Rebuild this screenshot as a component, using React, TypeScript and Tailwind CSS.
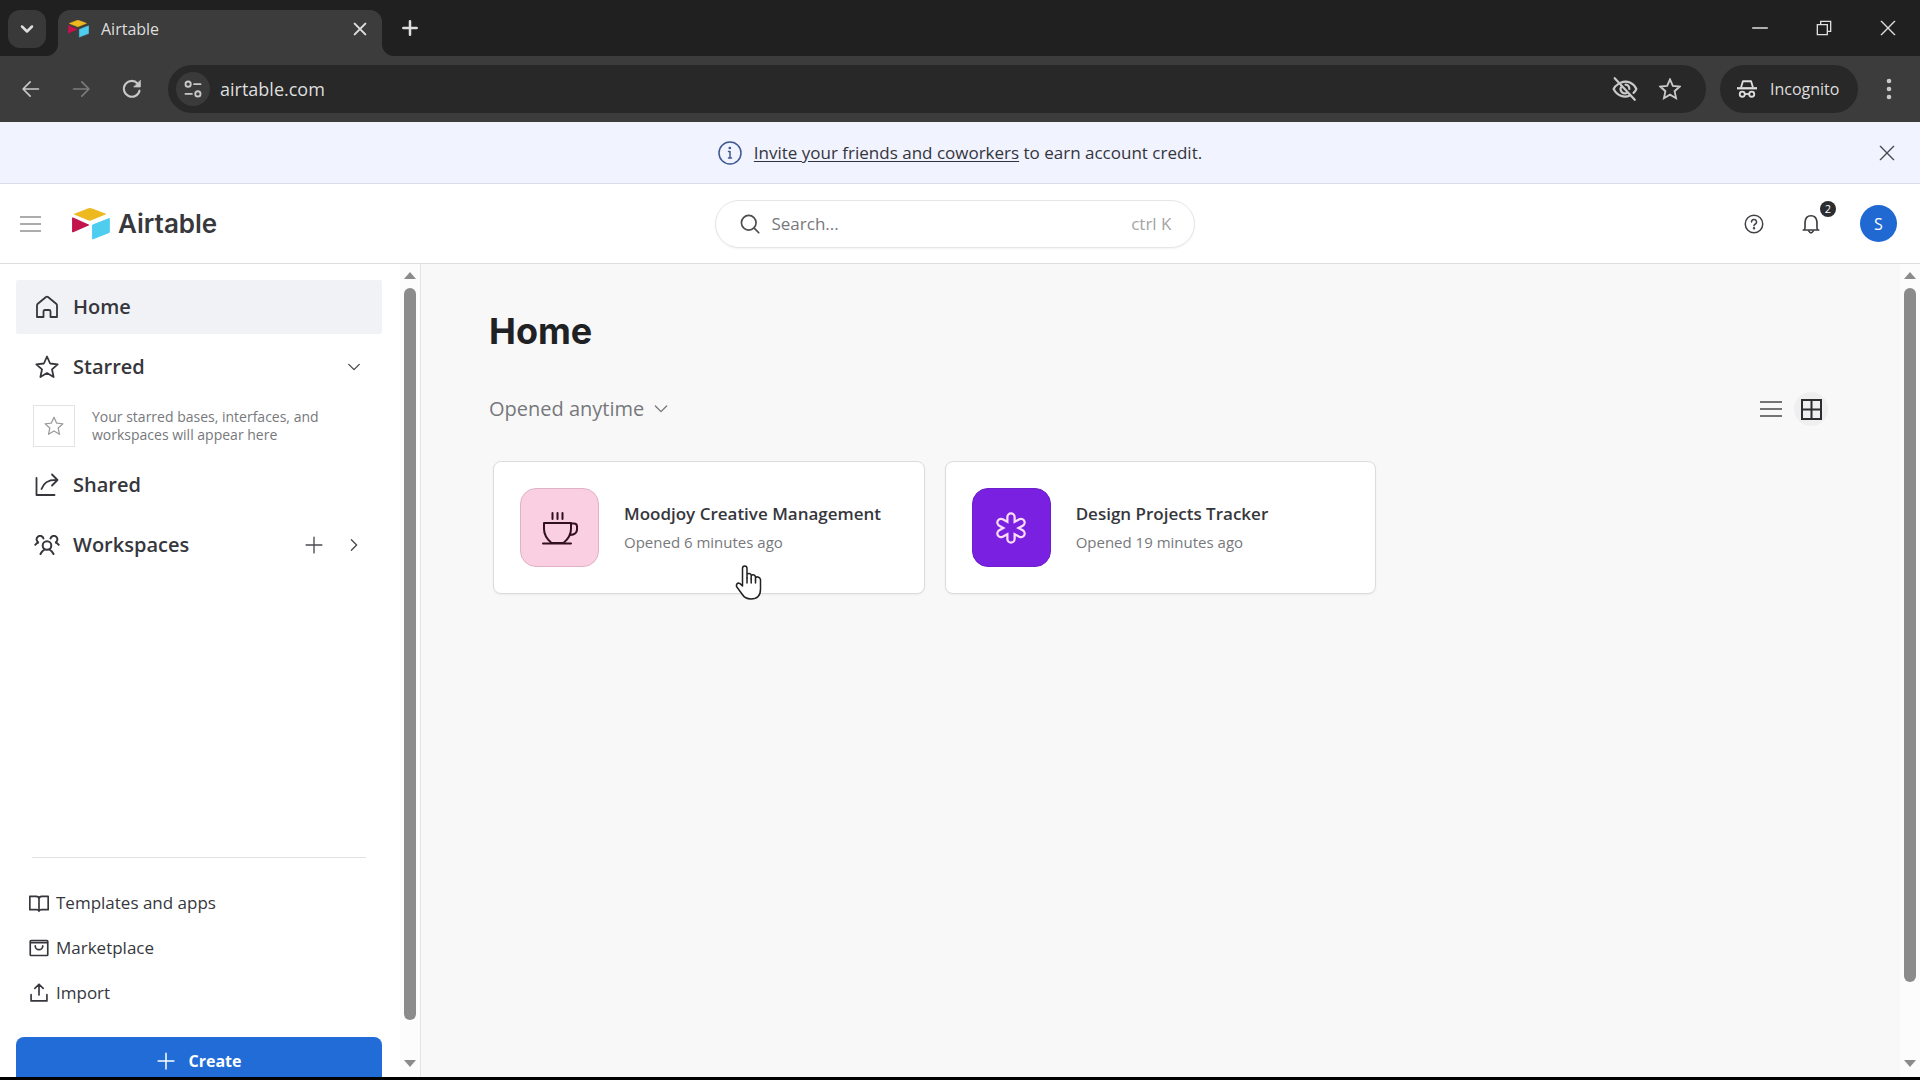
import type { ReactNode, SVGProps } from "react";
import clsx from "clsx";

const Icon = ({
  size = 24,
  stroke = 2,
  children,
  ...props
}: SVGProps<SVGSVGElement> & { size?: number; stroke?: number }) => (
  <svg
    width={size}
    height={size}
    viewBox="0 0 24 24"
    fill="none"
    stroke="currentColor"
    strokeWidth={stroke}
    strokeLinecap="round"
    strokeLinejoin="round"
    aria-hidden="true"
    className="shrink-0"
    {...props}
  >
    {children}
  </svg>
);

const starPath =
  "M12 1.5 15.1 8.5 22.7 9.3 17 14.4 18.6 22 12 18.1 5.4 22 7 14.4 1.3 9.3 8.9 8.5Z";

const AirtableMark = ({ className }: { className?: string }) => (
  <svg viewBox="0 0 38 32" className={className} strokeLinejoin="round" strokeWidth="1" aria-hidden="true">
    <path d="M2.5 6.2 16 .9Q17.9.2 19.8.9L33.4 6 19 11.9Q17.8 12.4 16.6 11.9Z" fill="#edb91f" stroke="#edb91f" />
    <path d="M.6 9.8V24L16.6 17Z" fill="#c3124c" stroke="#c3124c" />
    <path d="M20.6 17 37.3 10.5V24.4L20.6 31Z" fill="#4fcdef" stroke="#4fcdef" />
  </svg>
);

const IconButton = ({
  label,
  className,
  children,
}: {
  label: string;
  className?: string;
  children: ReactNode;
}) => (
  <button aria-label={label} className={clsx("flex shrink-0 items-center justify-center", className)}>
    {children}
  </button>
);

const TabStrip = () => (
  <div className="flex h-14 bg-[#202020] pl-2 text-[#dedede]">
    <IconButton label="Search tabs" className="mt-[10px] size-[38px] rounded-xl bg-[#393939]">
      <Icon size={20} stroke={3}>
        <path d="m6 9 6 6 6-6" />
      </Icon>
    </IconButton>
    <svg viewBox="0 0 12 12" className="size-3 self-end" aria-hidden="true">
      <path d="M12 0v12H0A12 12 0 0 0 12 0Z" fill="#3c3c3c" />
    </svg>
    <div className="mt-[10px] flex w-[324px] items-center rounded-t-xl bg-[#3c3c3c] pb-2 pl-[10px] pr-2">
      <AirtableMark className="w-[21px]" />
      <span className="ml-3 flex-1 text-base leading-6 text-[#dedede]">Airtable</span>
      <IconButton label="Close tab" className="size-7">
        <Icon size={16} stroke={3}>
          <path d="M4 4 20 20M20 4 4 20" />
        </Icon>
      </IconButton>
    </div>
    <svg viewBox="0 0 12 12" className="size-3 self-end" aria-hidden="true">
      <path d="M0 0v12H12A12 12 0 0 1 0 0Z" fill="#3c3c3c" />
    </svg>
    <IconButton label="New tab" className="w-8">
      <Icon size={20} stroke={3}>
        <path d="M12 4v16M4 12h16" />
      </Icon>
    </IconButton>
    <div className="ml-auto flex">
      <IconButton label="Minimize" className="w-16">
        <Icon size={16} stroke={2}>
          <path d="M1 12h22" />
        </Icon>
      </IconButton>
      <IconButton label="Restore" className="w-16">
        <Icon size={16} stroke={2}>
          <path d="M2 7h15v15H2zM7 7V2h15v15h-5" strokeLinejoin="miter" />
        </Icon>
      </IconButton>
      <IconButton label="Close window" className="w-16">
        <Icon size={16} stroke={2}>
          <path d="m2 2 20 20M22 2 2 22" />
        </Icon>
      </IconButton>
    </div>
  </div>
);

const Toolbar = () => (
  <div className="flex h-[66px] items-center bg-[#3c3c3c] pr-[15px] text-[#c9c9c9]">
    <div className="flex w-[168px] shrink-0 pl-[6px]">
      <IconButton label="Back" className="w-[50px]">
        <Icon size={20}>
          <path d="M21 12H3M11 3.500l-8.500 8.500 8.500 8.500" />
        </Icon>
      </IconButton>
      <IconButton label="Forward" className="w-[50px] text-[#7c7c7c]">
        <Icon size={20}>
          <path d="M3 12h18M13 3.500l8.500 8.500-8.500 8.500" />
        </Icon>
      </IconButton>
      <IconButton label="Reload" className="w-[52px]">
        <Icon size={20} stroke={2.500}>
          <path d="M21 14A9.500 9.500 0 1 1 18.700 5.300L20.500 7.500" />
          <path d="M22 2v7.500h-7.500Z" fill="currentColor" strokeWidth="1" />
        </Icon>
      </IconButton>
    </div>
    <div className="flex h-12 flex-1 items-center rounded-full bg-[#282828] pl-2 pr-[14px]">
      <IconButton label="View site information" className="size-[34px] rounded-full bg-[#3a3a3a]">
        <Icon size={18} stroke={2.500}>
          <path d="M13.500 5.500H22M2 18.500h8.500" />
          <circle cx="5.500" cy="5.500" r="3.500" />
          <circle cx="18.500" cy="18.500" r="3.500" />
        </Icon>
      </IconButton>
      <input
        aria-label="Address"
        defaultValue="airtable.com"
        className="ml-[10px] min-w-0 flex-1 bg-transparent text-lg text-[#dedede] outline-none"
      />
      <IconButton label="Third-party cookies blocked" className="w-[46px]">
        <Icon size={26} stroke={2}>
          <path d="M8 6.200C14 3.500 20 6.500 22.500 12c-.6 1.300-1.500 2.600-2.600 3.600M6 7.300C4 8.500 2.400 10.100 1.500 12c3 6 9.500 8.500 15 6" />
          <path d="M12.500 8a4 4 0 0 1 3.500 4M8.200 10.500a4 4 0 0 0 5.300 5.200M2.500 2 21 22" />
        </Icon>
      </IconButton>
      <IconButton label="Bookmark this tab" className="w-[44px]">
        <Icon size={22} stroke={2}>
          <path d={starPath} strokeLinejoin="miter" />
        </Icon>
      </IconButton>
    </div>
    <button className="ml-[14px] flex h-12 w-[138px] items-center rounded-full bg-[#282828] pl-[17px] text-base text-[#dedede]">
      <svg width="20" height="20" viewBox="0 0 22 20" fill="none" stroke="currentColor" strokeWidth="2" aria-hidden="true">
        <path d="M4.500 8 6.500 1.500h9L17.500 8" strokeLinejoin="round" />
        <path d="M0 9.200h22" strokeWidth="2.500" />
        <circle cx="5.800" cy="15.700" r="2.800" />
        <circle cx="16.200" cy="15.700" r="2.800" />
        <path d="M8.500 15.500h5" />
      </svg>
      <span className="ml-[13px]">Incognito</span>
    </button>
    <IconButton label="Menu" className="ml-[15px] w-8">
      <svg width="6" height="22" viewBox="0 0 6 22" fill="currentColor" aria-hidden="true">
        <circle cx="3" cy="3" r="2.300" />
        <circle cx="3" cy="11" r="2.300" />
        <circle cx="3" cy="19" r="2.300" />
      </svg>
    </IconButton>
  </div>
);

const InviteBanner = () => (
  <div className="grid h-[62px] grid-cols-[1fr_auto_1fr] items-center border-b border-[#dcdde6] bg-[#f1f3ff]">
    <p className="col-start-2 flex items-center gap-3 text-[17px] leading-6 text-[#33353d]">
      <Icon size={24} stroke={1.5} className="shrink-0 text-[#3d5894]">
        <circle cx="12" cy="12" r="11" />
        <path d="M10.500 10.500H12V17M10.500 17h3" />
        <circle cx="11.800" cy="7" r=".6" fill="currentColor" />
      </Icon>
      <span>
        <a href="#invite" className="underline underline-offset-2">
          Invite your friends and coworkers
        </a>{" "}
        to earn account credit.
      </span>
    </p>
    <IconButton label="Dismiss" className="mr-[21px] size-6 justify-self-end text-[#4a4b50]">
      <Icon size={16} stroke={2}>
        <path d="m2 2 20 20M22 2 2 22" />
      </Icon>
    </IconButton>
  </div>
);

const Header = () => (
  <header className="flex h-20 items-center border-b border-[#dedede] bg-white pl-5 pr-[23px]">
    <div className="flex flex-1 items-center">
      <IconButton label="Toggle sidebar" className="text-[#acacac]">
        <svg width="21" height="18" viewBox="0 0 21 18" stroke="currentColor" strokeWidth="2" aria-hidden="true">
          <path d="M0 2h21M0 9h21M0 16h21" />
        </svg>
      </IconButton>
      <a href="#home" className="ml-[31px] flex items-center text-[#37383c]">
        <AirtableMark className="w-[38px]" />
        <span className="ml-2 font-['Inter'] text-[26px] font-semibold leading-8">Airtable</span>
      </a>
    </div>
    <label className="mr-2 flex h-12 w-[480px] items-center rounded-full border border-[#e6e6e6] bg-white pl-6 pr-[22px] text-[#4b4c50] shadow-xs">
      <Icon size={20} stroke={2}>
        <circle cx="10.500" cy="10.500" r="8.800" />
        <path d="m17 17 5.500 5.500" />
      </Icon>
      <input
        type="text"
        aria-label="Search"
        placeholder="Search..."
        className="ml-3 min-w-0 flex-1 bg-transparent text-[17px] outline-none placeholder:text-[#77787c]"
      />
      <span className="text-[17px] text-[#a5a5a5]">ctrl K</span>
    </label>
    <div className="flex flex-1 items-center justify-end">
      <IconButton label="Help" className="size-6 text-[#414246]">
        <Icon size={20} stroke={1.800}>
          <circle cx="12" cy="12" r="10.500" />
          <path d="M9 9.500a3 3 0 1 1 4.200 2.800c-.8.400-1.200.9-1.200 1.700" />
          <circle cx="12" cy="17" r=".6" fill="currentColor" />
        </Icon>
      </IconButton>
      <IconButton label="Notifications, 2 unread" className="relative ml-8 size-[26px] text-[#3c3d41]">
        <Icon size={22} stroke={1.800}>
          <path d="M5 18c1-2 .3-5 .5-8C5.800 5.500 8.500 3 12 3s6.200 2.500 6.500 7c.2 3-.5 6 .5 8M3.500 18.500h17" />
          <path d="M9.500 19.500Q12 24 14.500 19.500" />
        </Icon>
        <span className="absolute -top-[10px] left-[22px] flex size-4 items-center justify-center rounded-full bg-[#2c2d31] text-[11px] leading-4 text-white">
          2
        </span>
      </IconButton>
      <button
        aria-label="Account"
        className="ml-9 flex size-[37px] items-center justify-center rounded-full bg-[#2069d3] text-base text-white"
      >
        S
      </button>
    </div>
  </header>
);

const Scrollbar = ({ fill }: { fill: number }) => (
  <div aria-hidden="true" className="flex w-5 shrink-0 flex-col items-center justify-between bg-[#fcfcfc] pb-[10px] pt-2 text-[#8b8b8b]">
    <svg width="12" height="7" viewBox="0 0 12 7" fill="currentColor">
      <path d="M6 0 12 7H0Z" />
    </svg>
    <div className="my-[9px] w-3 flex-1">
      <div className="rounded-full bg-[#8b8b8b]" style={{ height: `${fill}%` }} />
    </div>
    <svg width="12" height="7" viewBox="0 0 12 7" fill="currentColor">
      <path d="M6 7 12 0H0Z" />
    </svg>
  </div>
);

const NavItem = ({ label, icon, active }: { label: string; icon: ReactNode; active?: boolean }) => (
  <a
    href={`#${label.toLowerCase()}`}
    className={clsx(
      "flex h-[54px] w-full items-center gap-[14px] rounded-xs pl-[19px] text-xl font-semibold text-[#36373c]",
      active && "bg-[#f1f2f6]",
    )}
  >
    {icon}
    {label}
  </a>
);

const FooterLink = ({ label, icon }: { label: string; icon: ReactNode }) => (
  <a href={`#${label.toLowerCase()}`} className="flex h-[45px] items-center gap-[7px] pl-[13px] text-[17px] text-[#36373c]">
    {icon}
    {label}
  </a>
);

const Sidebar = () => (
  <aside className="flex w-[421px] shrink-0 overflow-hidden border-r border-[#e4e4e4] bg-white">
    <div className="flex flex-1 flex-col pl-4 pr-[18px] pt-4">
      <nav className="flex flex-col gap-[6px]">
        <NavItem
          active
          label="Home"
          icon={
            <Icon stroke={1.800}>
              <path d="M2 22V10.500Q2 9.500 2.800 8.800L11 2Q12 1.200 13 2l8.200 6.800Q22 9.500 22 10.500V22h-6.500v-5.500q0-1.500-1.500-1.500h-4q-1.500 0-1.500 1.500V22Z" />
            </Icon>
          }
        />
        <div className="flex items-center">
          <NavItem
            label="Starred"
            icon={
              <Icon stroke={1.800}>
                <path d={starPath} />
              </Icon>
            }
          />
          <IconButton label="Collapse starred" className="w-14 text-[#4a4b50]">
            <Icon size={18} stroke={1.800}>
              <path d="m5 8.500 7 7 7-7" />
            </Icon>
          </IconButton>
        </div>
        <div className="flex items-center gap-[17px] py-[5px] pl-[17px]">
          <div className="flex size-[42px] shrink-0 items-center justify-center border border-[#e3e3e3] text-[#9b9b9b]">
            <Icon size={20} stroke={1.500}>
              <path d={starPath} />
            </Icon>
          </div>
          <p className="text-sm leading-[18px] text-[#77787c]">
            Your starred bases, interfaces, and
            <br />
            workspaces will appear here
          </p>
        </div>
        <NavItem
          label="Shared"
          icon={
            <Icon stroke={1.800}>
              <path d="M1.500 5v17H19.500M17 1.500l5.500 5.500-5.500 5.500M22.500 7C14 6.500 8.500 10 6.500 16" />
            </Icon>
          }
        />
        <div className="flex items-center">
          <NavItem
            label="Workspaces"
            icon={
              <svg width="26" height="20" viewBox="0 0 26 20" fill="none" stroke="currentColor" strokeWidth="2" strokeLinecap="round" className="-mx-px shrink-0" aria-hidden="true">
                <circle cx="13" cy="10.500" r="4.300" />
                <path d="M6.500 19Q8 16 10.500 14.500M19.500 19Q18 16 15.500 14.500" />
                <path d="M9.500 3.500A3.500 3.500 0 1 0 4.800 7.600Q2.800 7.800 1.300 9.800M16.500 3.500A3.500 3.500 0 1 1 21.200 7.600Q23.200 7.800 24.700 9.800" />
              </svg>
            }
          />
          <IconButton label="Create workspace" className="w-6 text-[#4a4b50]">
            <Icon size={18} stroke={1.800}>
              <path d="M12 1.500v21M1.500 12h21" />
            </Icon>
          </IconButton>
          <IconButton label="Expand workspaces" className="w-14 text-[#4a4b50]">
            <Icon size={18} stroke={1.800}>
              <path d="m8.500 5 7 7-7 7" />
            </Icon>
          </IconButton>
        </div>
      </nav>
      <hr className="mx-4 mt-auto border-[#e2e2e2]" />
      <div className="mt-[22px] flex flex-col">
        <FooterLink
          label="Templates and apps"
          icon={
            <Icon size={20}>
              <path d="M1 4h7.500Q12 4 12 7v15q0-2-3-2H1ZM23 4h-7.500Q12 4 12 7v15q0-2 3-2h8Z" />
            </Icon>
          }
        />
        <FooterLink
          label="Marketplace"
          icon={
            <Icon size={20}>
              <rect x="1.500" y="3" width="21" height="18" rx="1" />
              <path d="M2 5.500h20" />
              <path d="M7.500 9.500a4.500 4.500 0 0 0 9 0" />
            </Icon>
          }
        />
        <FooterLink
          label="Import"
          icon={
            <Icon size={20}>
              <path d="M2.500 14v7.500h19V14M12 14.500V2M7 6.500 12 1.500l5 5" />
            </Icon>
          }
        />
      </div>
      <button className="-mb-2 mt-[22px] flex h-12 shrink-0 items-center justify-center gap-[14px] rounded-lg bg-[#216cd6] text-base font-bold text-white">
        <Icon size={18} stroke={2}>
          <path d="M12 1.500v21M1.500 12h21" />
        </Icon>
        Create
      </button>
    </div>
    <Scrollbar fill={96} />
  </aside>
);

const CoffeeIcon = () => (
  <svg width="36" height="34" viewBox="0 0 36 34" fill="none" stroke="#33101f" strokeWidth="2" strokeLinecap="round" strokeLinejoin="round" aria-hidden="true">
    <path d="M10.500 2v6M15.500 2v6M20.500 2v6" />
    <path d="M2 12h27v6c0 7-4 11-7.500 14h-12C6 29 2 25 2 18Z" />
    <path d="M29 12.500h3q3 0 3 3v3q0 5-7 5.500M1 32.500h28" />
  </svg>
);

const AsteriskIcon = () => (
  <svg width="34" height="34" viewBox="-17 -17 34 34" fill="none" strokeLinecap="round" aria-hidden="true">
    <g stroke="#fbdcf6" strokeWidth="9.500">
      <path d="M0-11V11M-10-5.500 10 5.500M10-5.500-10 5.500" />
    </g>
    <g stroke="#7a20e0" strokeWidth="5">
      <path d="M0-11V11M-10-5.500 10 5.500M10-5.500-10 5.500" />
    </g>
  </svg>
);

const HandCursor = () => (
  <svg width="27" height="36" viewBox="0 0 27 36" fill="white" stroke="#222" strokeWidth="1.500" strokeLinejoin="round" strokeLinecap="round" aria-hidden="true" className="pointer-events-none absolute left-[241px] top-[103px]">
    <path d="M7.500 21V3.500Q7.500 1 9.700 1T12 3.500V13V9.800Q12 8.500 14 8.500T16.200 10.500V14V11Q16.500 9.500 18.300 9.700T20.500 12V15V13Q21 11.500 23 12T25.500 14.500V24Q25.500 34 16 34Q10 34 7 29L1.500 21.500Q1 18.500 3.500 18Q5 18 7.500 21Z" />
    <path d="M12 13v5M16.200 14v4M20.500 15v3" fill="none" />
  </svg>
);

const BaseCard = ({
  title,
  opened,
  tile,
  icon,
  children,
}: {
  title: string;
  opened: string;
  tile: string;
  icon: ReactNode;
  children?: ReactNode;
}) => (
  <a
    href="#base"
    className="relative flex h-[133px] items-center rounded-lg border border-[#dcdcdc] bg-white pl-[26px] shadow-xs"
  >
    <div className={clsx("flex size-[79px] shrink-0 items-center justify-center rounded-2xl border", tile)}>{icon}</div>
    <div className="ml-[25px]">
      <h2 className="text-[17px] font-semibold leading-7 text-[#36373c]">{title}</h2>
      <p className="text-[15px] leading-7 text-[#77787c]">{opened}</p>
    </div>
    {children}
  </a>
);

const HomePage = () => (
  <main className="flex min-w-0 flex-1 bg-[#f8f8f8]">
    <div className="min-w-0 flex-1 pl-[68px] pr-[72px] pt-[45px]">
      <h1 className="font-['Inter'] text-4xl font-bold leading-[44px] text-[#202124]">Home</h1>
      <div className="mt-[38px] flex h-9 items-center justify-between">
        <button className="flex items-center gap-2 text-xl text-[#77787c]">
          Opened anytime
          <Icon size={18} stroke={1.800}>
            <path d="m4.500 8 7.500 7.500L19.500 8" />
          </Icon>
        </button>
        <div className="flex items-center">
          <IconButton label="List view" className="size-[34px] text-[#747474]">
            <svg width="22" height="18" viewBox="0 0 22 18" stroke="currentColor" strokeWidth="2" aria-hidden="true">
              <path d="M0 2h22M0 9h22M0 16h22" />
            </svg>
          </IconButton>
          <IconButton label="Grid view" className="ml-[6px] size-[34px] rounded-full bg-[#efeff0] text-[#2c2d31]">
            <svg width="21" height="21" viewBox="0 0 21 21" fill="none" stroke="currentColor" strokeWidth="2" aria-hidden="true">
              <path d="M1 1h19v19H1zM10.500 1v19M1 10.500h19" />
            </svg>
          </IconButton>
        </div>
      </div>
      <div className="ml-1 mt-[34px] grid grid-cols-3 gap-5">
        <BaseCard
          title="Moodjoy Creative Management"
          opened="Opened 6 minutes ago"
          tile="border-[#dfb3c5] bg-[#f9cfe1]"
          icon={<CoffeeIcon />}
        >
          <HandCursor />
        </BaseCard>
        <BaseCard
          title="Design Projects Tracker"
          opened="Opened 19 minutes ago"
          tile="border-[#6c1fcb] bg-[#7a20e0]"
          icon={<AsteriskIcon />}
        />
      </div>
    </div>
    <Scrollbar fill={91} />
  </main>
);

const App = () => (
  <div className="flex h-screen flex-col overflow-hidden border-b-3 border-black bg-white font-['Open_Sans',sans-serif]">
    <TabStrip />
    <Toolbar />
    <InviteBanner />
    <Header />
    <div className="flex min-h-0 flex-1">
      <Sidebar />
      <HomePage />
    </div>
  </div>
);

export default App;
